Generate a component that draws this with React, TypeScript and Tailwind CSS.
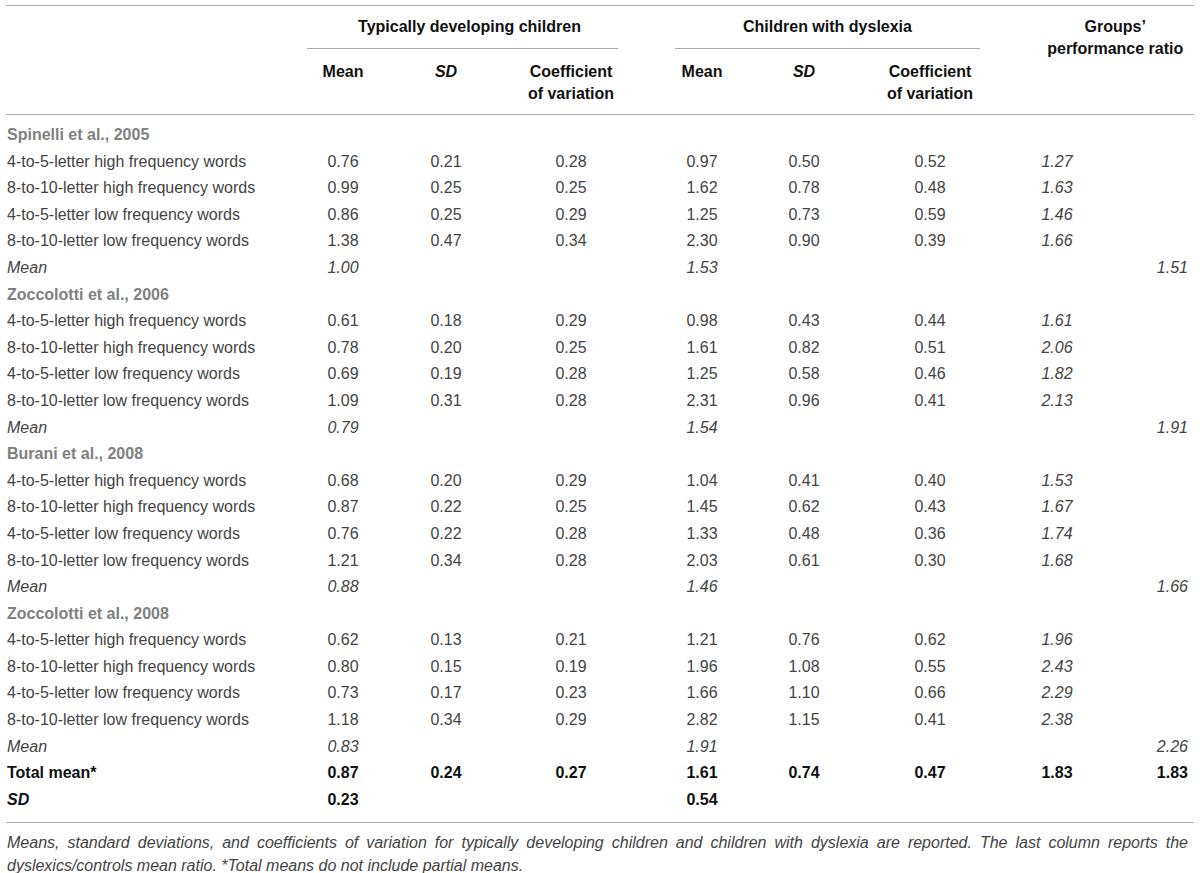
import React from "react";

type Kind = "data" | "study" | "mean" | "total" | "sd";

interface RowData {
    kind: Kind;
    label: string;
    values?: string[]; // mean1, sd1, cov1, mean2, sd2, cov2, ratio, meanRatio
}

const WORDS = [
    "4-to-5-letter high frequency words",
    "8-to-10-letter high frequency words",
    "4-to-5-letter low frequency words",
    "8-to-10-letter low frequency words",
];

const studies: { name: string; rows: string[][]; mean: string[] }[] = [
    {
        name: "Spinelli et al., 2005",
        rows: [
            ["0.76", "0.21", "0.28", "0.97", "0.50", "0.52", "1.27"],
            ["0.99", "0.25", "0.25", "1.62", "0.78", "0.48", "1.63"],
            ["0.86", "0.25", "0.29", "1.25", "0.73", "0.59", "1.46"],
            ["1.38", "0.47", "0.34", "2.30", "0.90", "0.39", "1.66"],
        ],
        mean: ["1.00", "1.53", "1.51"],
    },
    {
        name: "Zoccolotti et al., 2006",
        rows: [
            ["0.61", "0.18", "0.29", "0.98", "0.43", "0.44", "1.61"],
            ["0.78", "0.20", "0.25", "1.61", "0.82", "0.51", "2.06"],
            ["0.69", "0.19", "0.28", "1.25", "0.58", "0.46", "1.82"],
            ["1.09", "0.31", "0.28", "2.31", "0.96", "0.41", "2.13"],
        ],
        mean: ["0.79", "1.54", "1.91"],
    },
    {
        name: "Burani et al., 2008",
        rows: [
            ["0.68", "0.20", "0.29", "1.04", "0.41", "0.40", "1.53"],
            ["0.87", "0.22", "0.25", "1.45", "0.62", "0.43", "1.67"],
            ["0.76", "0.22", "0.28", "1.33", "0.48", "0.36", "1.74"],
            ["1.21", "0.34", "0.28", "2.03", "0.61", "0.30", "1.68"],
        ],
        mean: ["0.88", "1.46", "1.66"],
    },
    {
        name: "Zoccolotti et al., 2008",
        rows: [
            ["0.62", "0.13", "0.21", "1.21", "0.76", "0.62", "1.96"],
            ["0.80", "0.15", "0.19", "1.96", "1.08", "0.55", "2.43"],
            ["0.73", "0.17", "0.23", "1.66", "1.10", "0.66", "2.29"],
            ["1.18", "0.34", "0.29", "2.82", "1.15", "0.41", "2.38"],
        ],
        mean: ["0.83", "1.91", "2.26"],
    },
];

const rows: RowData[] = [];
studies.forEach((s) => {
    rows.push({ kind: "study", label: s.name });
    s.rows.forEach((r, i) => rows.push({ kind: "data", label: WORDS[i], values: [...r, ""] }));
    rows.push({
        kind: "mean",
        label: "Mean",
        values: [s.mean[0], "", "", s.mean[1], "", "", "", s.mean[2]],
    });
});
rows.push({
    kind: "total",
    label: "Total mean*",
    values: ["0.87", "0.24", "0.27", "1.61", "0.74", "0.47", "1.83", "1.83"],
});
rows.push({ kind: "sd", label: "SD", values: ["0.23", "", "", "0.54", "", "", "", ""] });

const GRID =
    "grid grid-cols-[285.5px_103px_103px_147px_115px_89px_163px_91px_91.5px]";

function BodyRow({ row }: { row: RowData }) {
    const labelCls =
        row.kind === "study"
            ? "font-bold text-[#808080]"
            : row.kind === "mean"
              ? "italic text-[#444]"
              : row.kind === "total"
                ? "font-bold text-[#111]"
                : row.kind === "sd"
                  ? "font-bold italic text-[#111]"
                  : "text-[#444]";

    const valueCls = (i: number) => {
        if (row.kind === "total" || row.kind === "sd") return "font-bold text-[#111]";
        if (row.kind === "mean") return "italic text-[#444]";
        if (i >= 6) return "italic text-[#444]";
        return "text-[#444]";
    };

    return (
        <div className={`${GRID} h-[26.6px] leading-[26.6px]`}>
            <div className={`pl-[1px] whitespace-nowrap ${labelCls}`}>{row.label}</div>
            {(row.values ?? ["", "", "", "", "", "", "", ""]).map((v, i) => (
                <div
                    key={i}
                    className={`${i === 7 ? "text-right pr-[6px]" : "text-center"} ${valueCls(i)}`}
                >
                    {v}
                </div>
            ))}
        </div>
    );
}

export default function App() {
    return (
        <div className="w-[1200px] h-[873px] bg-white overflow-hidden pt-[5px] font-['Liberation_Sans',Arial,sans-serif] text-[16px]">
            <div className="mx-[6px] w-[1188px]">
                {/* header */}
                <div
                    className={`${GRID} grid-rows-[43px_65px] border-t border-b border-[#ababab] text-[#111] font-bold`}
                >
                    <div className="row-span-2" />
                    <div className="col-span-3 ml-[15.5px] mr-[26.5px] pl-[14px] border-b border-[#ababab] flex items-center justify-center">
                        Typically developing children
                    </div>
                    <div className="col-span-3 ml-[30.5px] mr-[31.5px] border-b border-[#ababab] flex items-center justify-center">
                        Children with dyslexia
                    </div>
                    <div className="col-span-2 row-span-2 pl-[25px] pt-[10px] text-center leading-[22px]">
                        Groups’
                        <br />
                        performance ratio
                    </div>
                    <div className="pt-[12px] leading-[22px] text-center">Mean</div>
                    <div className="pt-[12px] leading-[22px] text-center italic">SD</div>
                    <div className="pt-[12px] leading-[22px] text-center">
                        Coefficient
                        <br />
                        of variation
                    </div>
                    <div className="pt-[12px] leading-[22px] text-center">Mean</div>
                    <div className="pt-[12px] leading-[22px] text-center italic">SD</div>
                    <div className="pt-[12px] leading-[22px] text-center">
                        Coefficient
                        <br />
                        of variation
                    </div>
                </div>

                {/* body */}
                <div className="pt-[7px] pb-[9px] border-b border-[#ababab]">
                    {rows.map((r, i) => (
                        <BodyRow key={i} row={r} />
                    ))}
                </div>

                <p className="pt-[8px] pl-[1px] pr-[6px] text-[16px] leading-[23px] italic text-[#444] text-justify">
                    Means, standard deviations, and coefficients of variation for typically
                    developing children and children with dyslexia are reported. The last column
                    reports the dyslexics/controls mean ratio. *Total means do not include partial
                    means.
                </p>
            </div>
        </div>
    );
}
